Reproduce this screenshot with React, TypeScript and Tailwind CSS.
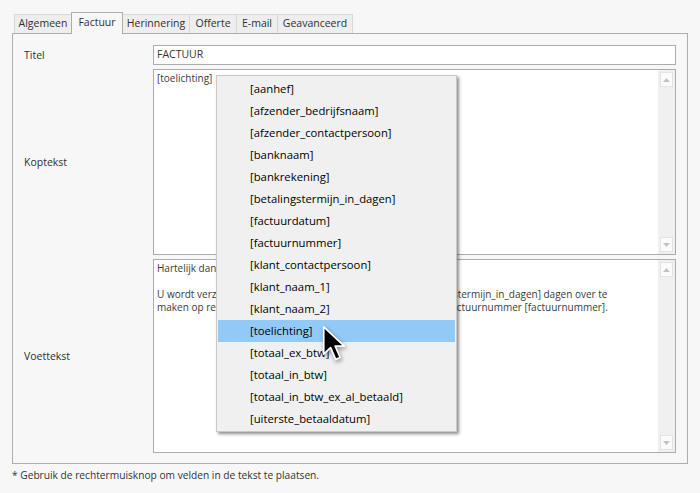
import React from "react";

const tabs = [
  { label: "Algemeen", w: "w-[57px]" },
  { label: "Factuur", w: "w-[52px]", active: true },
  { label: "Herinnering", w: "w-[66px]" },
  { label: "Offerte", w: "w-[47px]" },
  { label: "E-mail", w: "w-[41px]" },
  { label: "Geavanceerd", w: "w-[76px]" },
];

const menuItems = [
  "[aanhef]",
  "[afzender_bedrijfsnaam]",
  "[afzender_contactpersoon]",
  "[banknaam]",
  "[bankrekening]",
  "[betalingstermijn_in_dagen]",
  "[factuurdatum]",
  "[factuurnummer]",
  "[klant_contactpersoon]",
  "[klant_naam_1]",
  "[klant_naam_2]",
  "[toelichting]",
  "[totaal_ex_btw]",
  "[totaal_in_btw]",
  "[totaal_in_btw_ex_al_betaald]",
  "[uiterste_betaaldatum]",
];

function ScrollButton({ down }: { down?: boolean }) {
  return (
    <div className="w-[13px] h-[15px] bg-[#fbfbfb] border border-[#e4e4e4] flex items-center justify-center">
      <svg width="7" height="4" viewBox="0 0 7 4">
        {down ? (
          <polygon points="0,0 7,0 3.5,4" fill="#c2c2c2" />
        ) : (
          <polygon points="0,4 7,4 3.5,0" fill="#c2c2c2" />
        )}
      </svg>
    </div>
  );
}

function TextBox({ children }: { children?: React.ReactNode }) {
  return (
    <div className="h-full bg-white border border-[#ababab] flex">
      <div className="flex-1 pl-[3px] pt-[2px] text-[10px] leading-[13px] text-[#3a3a3a] whitespace-pre overflow-hidden">
        {children}
      </div>
      <div className="w-[17px] bg-[#f0f0f0] flex flex-col justify-between items-center py-[2px]">
        <ScrollButton />
        <ScrollButton down />
      </div>
    </div>
  );
}

export default function App() {
  return (
    <div className="w-[700px] h-[493px] bg-[#f7f7f7] relative font-['Open_Sans',sans-serif] text-[#303030] overflow-hidden">
      <div className="pt-3 px-3">
        <div className="flex items-end h-[21px] pl-[2px]">
          {tabs.map((t, i) =>
            t.active ? (
              <div
                key={t.label}
                className={`${t.w} h-[22px] -mb-px relative z-10 bg-[#f7f7f7] border border-b-0 border-[#adadad] flex items-center justify-center text-[10.5px] pb-[2px]`}
              >
                {t.label}
              </div>
            ) : (
              <div
                key={t.label}
                className={`${t.w} h-[19px] bg-[#eeeeee] border-t border-[#d9d9d9] ${i === 0 ? "border-l" : ""} ${i === tabs.length - 1 ? "border-r" : ""} ${i > 0 && !tabs[i - 1].active ? "border-l" : ""} flex items-center justify-center text-[10.5px]`}
              >
                {t.label}
              </div>
            )
          )}
        </div>
        <div className="h-[431px] border border-[#adadad] px-[11px] pt-[11px] pb-[10px] grid grid-cols-[129px_1fr] grid-rows-[20px_186px_194px] gap-y-[4px] text-[10.5px]">
          <div className="flex items-center pt-[1px]">Titel</div>
          <div className="bg-white border border-[#ababab] flex items-center pl-[3px] text-[10.5px] text-[#333]">
            FACTUUR
          </div>
          <div className="flex items-center pt-[1px]">Koptekst</div>
          <TextBox>[toelichting]</TextBox>
          <div className="flex items-center pt-[1px]">Voettekst</div>
          <TextBox>
            {"Hartelijk dank voor uw opdracht.\n\nU wordt verzocht het nog openstaande bedrag binnen [betalingstermijn_in_dagen] dagen over te\nmaken op rekening [bankrekening], onder vermelding van het factuurnummer [factuurnummer]."}
          </TextBox>
        </div>
        <div className="mt-[4px] text-[10.2px] leading-[14px] text-[#333]">
          * Gebruik de rechtermuisknop om velden in de tekst te plaatsen.
        </div>
      </div>

      {/* Context menu */}
      <div className="absolute left-[216px] top-[75px] w-[241px] bg-[#f0f0f0] border border-[#c8c8c8] px-[1px] pt-[2px] pb-[1px] shadow-[2px_2px_3px_rgba(0,0,0,0.45)] z-20">
        {menuItems.map((m) => (
          <div
            key={m}
            className={`h-[22px] pl-[32px] flex items-center text-[11.3px] text-black ${m === "[toelichting]" ? "bg-[#91c9f7]" : ""}`}
          >
            {m}
          </div>
        ))}
      </div>

      {/* Cursor */}
      <svg
        className="absolute left-[322px] top-[325px] z-30 drop-shadow-[1px_2px_2px_rgba(0,0,0,0.4)]"
        width="24"
        height="37"
        viewBox="0 0 14 21.5"
      >
        <path
          d="M1,1 V17 L5,13.2 L8,20 L10.6,18.9 L7.7,12.3 H13 Z"
          fill="#000"
          stroke="#fff"
          strokeWidth="1"
          strokeLinejoin="round"
        />
      </svg>
    </div>
  );
}
